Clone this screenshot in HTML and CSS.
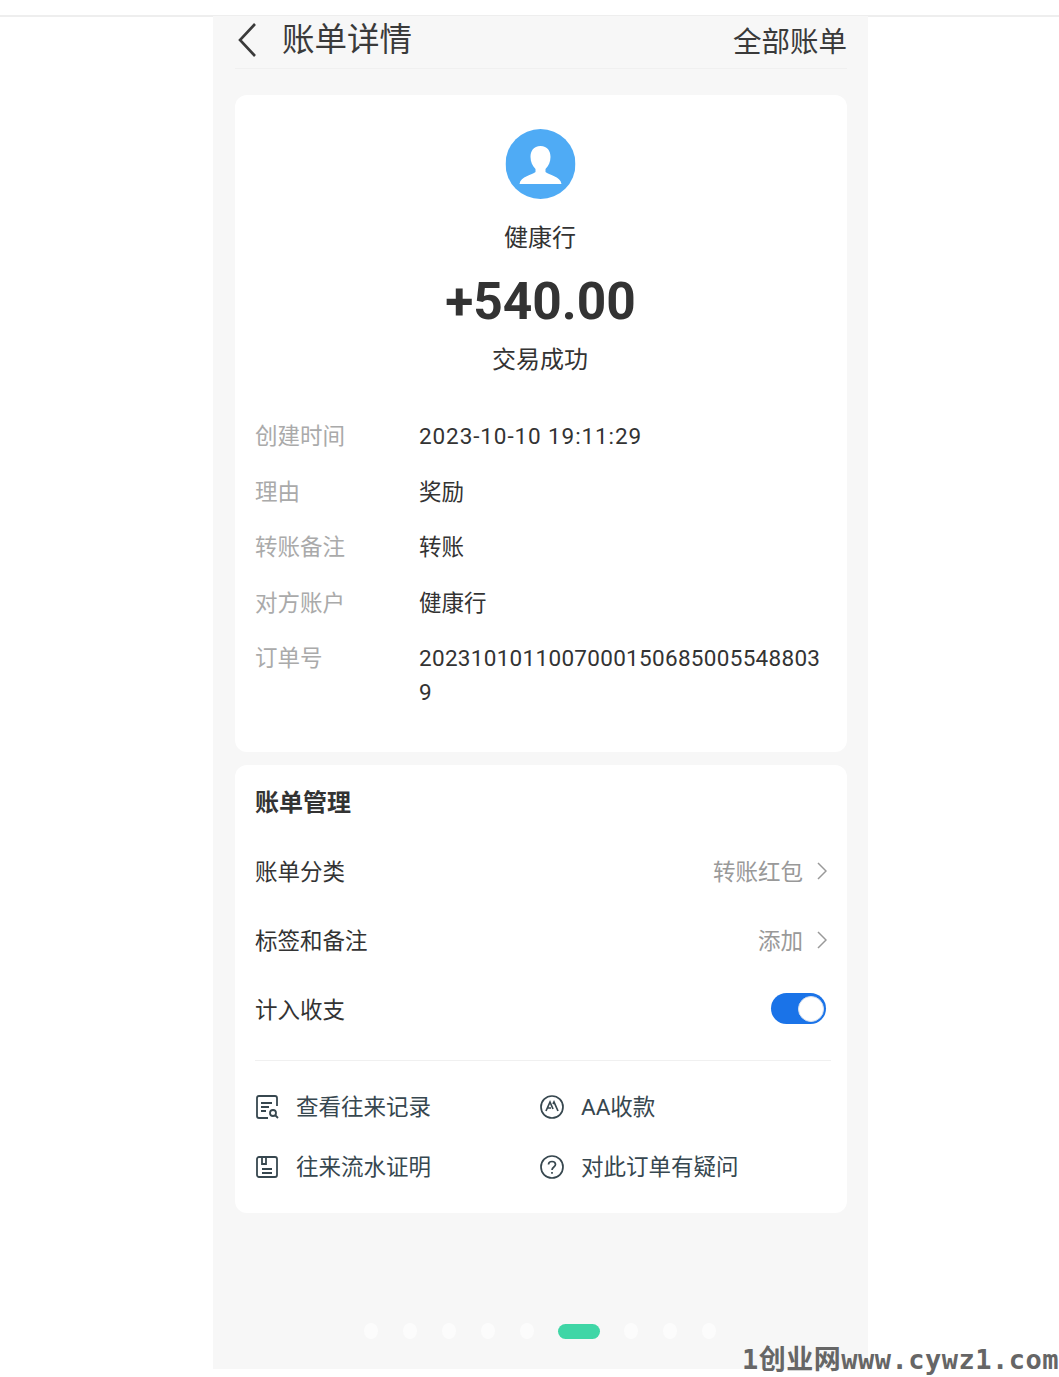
FILE: index.html
```html
<!DOCTYPE html>
<html lang="zh-CN">
<head>
    <meta charset="UTF-8">
    <meta name="viewport" content="width=device-width, initial-scale=1.0">
    <title>账单详情</title>
    <link rel="stylesheet" href="styles.css">
</head>
<body>
    <div class="topbar"></div>
    <div class="phone">
        <header class="header">
            <svg class="back" width="20" height="34" viewBox="0 0 20 34"><path d="M18 1 L3 17 L18 33" fill="none" stroke="#3a3a3a" stroke-width="2.6"/></svg>
            <h1 class="title">账单详情</h1>
            <span class="all">全部账单</span>
        </header>

        <section class="card card-detail">
            <svg class="avatar" width="70" height="70" viewBox="0 0 70 70">
                <circle cx="35" cy="35" r="35" fill="#4fabf5"/>
                <path d="M35 17 C28 17 25 22 25 28 C25 33 27 37 30 40 L30 43 C27 46 15 47 14 55 L56 55 C55 47 43 46 40 43 L40 40 C43 37 45 33 45 28 C45 22 42 17 35 17 Z" fill="#fff"/>
            </svg>
            <div class="payee">健康行</div>
            <div class="amount">+540.00</div>
            <div class="status">交易成功</div>

            <dl class="info">
                <div class="info-row"><dt>创建时间</dt><dd class="date">2023-10-10 19:11:29</dd></div>
                <div class="info-row"><dt>理由</dt><dd>奖励</dd></div>
                <div class="info-row"><dt>转账备注</dt><dd>转账</dd></div>
                <div class="info-row"><dt>对方账户</dt><dd>健康行</dd></div>
                <div class="info-row"><dt>订单号</dt><dd class="order">20231010110070001506850055488039</dd></div>
            </dl>
        </section>

        <section class="card card-manage">
            <h2 class="manage-title">账单管理</h2>
            <div class="manage-row">
                <span>账单分类</span>
                <span class="manage-value">转账红包
                    <svg class="arrow" width="10" height="18" viewBox="0 0 10 18"><path d="M1 1 L9 9 L1 17" fill="none" stroke="#999" stroke-width="1.5"/></svg>
                </span>
            </div>
            <div class="manage-row">
                <span>标签和备注</span>
                <span class="manage-value">添加
                    <svg class="arrow" width="10" height="18" viewBox="0 0 10 18"><path d="M1 1 L9 9 L1 17" fill="none" stroke="#999" stroke-width="1.5"/></svg>
                </span>
            </div>
            <div class="manage-row">
                <span>计入收支</span>
                <span class="switch"><span class="knob"></span></span>
            </div>
            <div class="links">
                <a class="link">
                    <svg width="24" height="24" viewBox="0 0 24 24" fill="none" stroke="#37474f" stroke-width="1.8"><path d="M22 11 V3 Q22 1 20 1 H4 Q2 1 2 3 V21 Q2 23 4 23 H13"/><path d="M6 8 H17 M6 12 H14 M6 16 H11"/><circle cx="18" cy="18" r="3"/><path d="M20 20 L23 23"/></svg>
                    <span>查看往来记录</span>
                </a>
                <a class="link">
                    <svg width="24" height="24" viewBox="0 0 24 24" fill="none" stroke="#37474f" stroke-width="1.7"><circle cx="12" cy="12" r="11"/><path d="M6 16 L10 7 L13 14 M13 9 L14 7 L18 16 M7.5 13 H11"/></svg>
                    <span>AA收款</span>
                </a>
                <a class="link">
                    <svg width="24" height="24" viewBox="0 0 24 24" fill="none" stroke="#37474f" stroke-width="1.8"><rect x="2" y="2" width="20" height="20" rx="2"/><path d="M7 2 V9 H11 V2 M7 14 H17 M7 18 H17"/></svg>
                    <span>往来流水证明</span>
                </a>
                <a class="link">
                    <svg width="24" height="24" viewBox="0 0 24 24" fill="none" stroke="#37474f" stroke-width="1.7"><circle cx="12" cy="12" r="11"/><path d="M8.5 9.5 C8.5 5.5 15.5 5.5 15.5 9.5 C15.5 12 12 12 12 15"/><path d="M12 17 V18.8"/></svg>
                    <span>对此订单有疑问</span>
                </a>
            </div>
        </section>

        <div class="pager">
            <i class="dot"></i><i class="dot"></i><i class="dot"></i><i class="dot"></i><i class="dot"></i>
            <i class="dot-active"></i>
            <i class="dot"></i><i class="dot"></i><i class="dot"></i>
        </div>
    </div>
    <div class="watermark">1创业网www.cywz1.com</div>
</body>
</html>
```

FILE: styles.css
```css
html, body {
    height: 100%;
}

body {
    margin: 0;
    background-color: #fff;
    font-family: "Roboto", "Noto Sans CJK SC", sans-serif;
    color: #333;
    position: relative;
    overflow: hidden;
}

.topbar {
    height: 15px;
    border-bottom: 2px solid #eee;
}

.phone {
    width: 655px;
    height: 1353px;
    margin-left: 213px;
    background-color: #f7f7f7;
    padding: 0 21px 0 22px;
    box-sizing: border-box;
    margin-top: -1px;
}

.header {
    display: flex;
    align-items: center;
    height: 52px;
    box-sizing: content-box;
    border-bottom: 1px solid #f0f0f0;
    margin-bottom: 26px;
}

.back {
    margin-left: 2px;
    margin-top: -4px;
    flex-shrink: 0;
}

.title {
    font-size: 32.5px;
    font-weight: 400;
    margin: -4px 0 0 25px;
    color: #3a3a3a;
    line-height: 48px;
}

.all {
    margin-left: auto;
    margin-top: -6px;
    font-size: 28.5px;
    color: #3a3a3a;
}

.card {
    background-color: #fff;
    border-radius: 12px;
    padding: 0 20px;
}

.card-detail {
    height: 657px;
    padding-top: 34px;
    box-sizing: border-box;
    margin-bottom: 13px;
    text-align: center;
}

.avatar {
    display: block;
    margin: 0 auto;
    transform: translateX(-0.5px);
}

.payee {
    font-size: 24px;
    line-height: 36px;
    margin-top: 21px;
    margin-right: 2px;
}

.amount {
    font-size: 51.5px;
    font-weight: 700;
    line-height: 60px;
    margin-top: 16px;
    margin-right: 1px;
    color: #333;
}

.status {
    font-size: 24px;
    line-height: 36px;
    margin-top: 10px;
    margin-right: 2px;
}

.info {
    margin: 41px 0 0;
    text-align: left;
}

.info-row {
    display: flex;
    font-size: 22.5px;
    line-height: 34px;
    margin-bottom: 21.5px;
}

.info-row dt {
    width: 164px;
    color: #aaa;
    flex-shrink: 0;
}

.info-row dd {
    margin: 0;
    width: 410px;
    color: #333;
}

.date {
    letter-spacing: 0.9px;
}

.order {
    word-break: break-all;
    letter-spacing: 0.3px;
}

.card-manage {
    height: 448px;
    box-sizing: border-box;
    padding-top: 20px;
}

.manage-title {
    font-size: 24px;
    font-weight: 700;
    line-height: 36px;
    margin: 0 0 32px;
}

.manage-row {
    display: flex;
    justify-content: space-between;
    align-items: center;
    font-size: 22.5px;
    height: 34px;
    margin-bottom: 35px;
}

.manage-value {
    display: flex;
    align-items: center;
    color: #999;
}

.arrow {
    margin-left: 14px;
    margin-top: 2px;
}

.switch {
    width: 55px;
    height: 31px;
    margin-right: 1px;
    margin-top: 1px;
    border-radius: 16px;
    background-color: #1a73e8;
    display: flex;
    align-items: center;
    justify-content: flex-end;
    padding-right: 2px;
    box-sizing: border-box;
}

.knob {
    width: 26px;
    height: 26px;
    box-sizing: border-box;
    border: 1px solid #d5dfee;
    border-radius: 50%;
    background-color: #fff;
}

.links {
    display: grid;
    grid-template-columns: 285px 1fr;
    row-gap: 26px;
    border-top: 1px solid #f0f0f0;
    margin-top: 17px;
    margin-right: -4px;
    padding-top: 29px;
}

.link {
    display: flex;
    align-items: center;
    gap: 17px;
    font-size: 22.5px;
    line-height: 34px;
    color: #37474f;
}

.pager {
    display: flex;
    align-items: center;
    height: 16px;
    margin-top: 110px;
    padding-left: 129px;
}

.dot {
    width: 14px;
    height: 16px;
    border-radius: 50%;
    background-color: #fcfcfc;
    margin-right: 25px;
}

.dot-active {
    width: 42px;
    height: 15px;
    border-radius: 8px;
    background-color: #3fd6a6;
    margin: 0 24px 0 -1px;
}

/* site stamp over the bottom corner */
.watermark {
    position: absolute;
    right: 0;
    bottom: 0;
    font-family: "DejaVu Sans Mono", "Noto Sans CJK SC", monospace;
    font-size: 27px;
    letter-spacing: 0.5px;
    font-weight: 700;
    line-height: 34px;
    color: #666;
    white-space: nowrap;
}
```
